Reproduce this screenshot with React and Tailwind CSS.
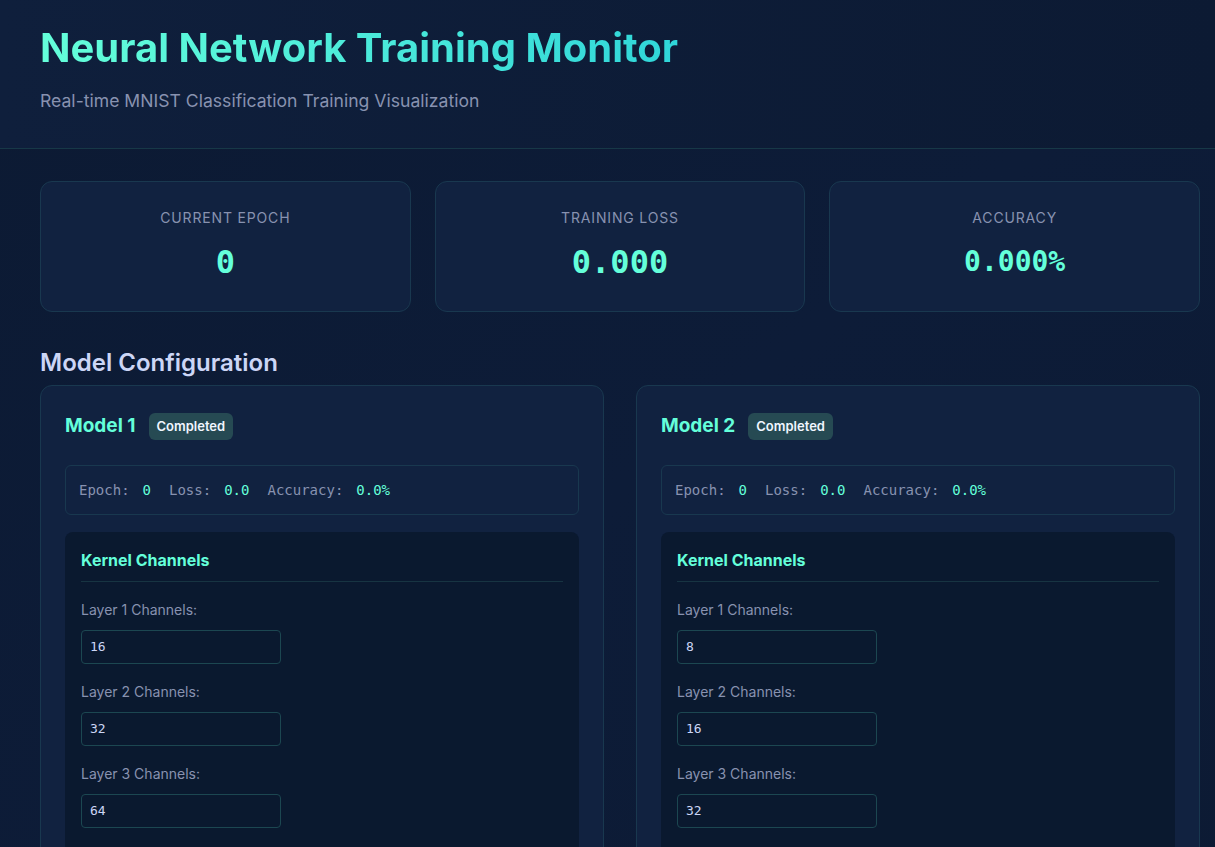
import React from "react";

const mono = { fontFamily: '"DejaVu Sans Mono", "Liberation Mono", monospace' };

function StatCard({ label, value, small }) {
  return (
    <div className="rounded-xl border border-[#19384f] bg-[#112240] pt-[26px] pb-[29px] text-center">
      <div className="text-[14px] leading-5 uppercase tracking-[0.06em] text-[#8892b0]">{label}</div>
      <div
        className={`mt-[14px] leading-[40px] font-bold text-[#64ffda] ${small ? "text-[28px]" : "text-[32px]"}`}
        style={mono}
      >
        {value}
      </div>
    </div>
  );
}

function Input({ value }) {
  return (
    <div
      className="mt-[10px] h-[34px] w-[200px] rounded border border-[#1c4751] bg-[#0a192f] px-2 flex items-center text-[13px] text-[#ccd6f6]"
      style={mono}
    >
      {value}
    </div>
  );
}

function Field({ label, value, first }) {
  return (
    <div className="mt-[18px]">
      <div className="text-[14px] leading-5 text-[#8892b0]">{label}</div>
      <Input value={value} />
    </div>
  );
}

function ModelCard({ name, channels }) {
  return (
    <div className="rounded-xl border border-[#19384f] bg-[#112240] px-6 pt-[27px]">
      <div className="flex items-center h-[27px]">
        <div className="text-[19px] font-bold text-[#64ffda]">{name}</div>
        <div className="ml-[13px] h-[27px] px-2 flex items-center rounded-md bg-[#264a53] text-[13px] font-semibold text-[#f0f6ff]">
          Completed
        </div>
      </div>
      <div
        className="mt-[25px] h-[50px] rounded-md border border-[#19384f] bg-[#112240] px-[13px] flex items-center text-[14px] text-[#8892b0]"
        style={mono}
      >
        <span className="mr-[18px]">
          Epoch:<span className="ml-[13px] text-[#64ffda]">0</span>
        </span>
        <span className="mr-[18px]">
          Loss:<span className="ml-[13px] text-[#64ffda]">0.0</span>
        </span>
        <span>
          Accuracy:<span className="ml-[13px] text-[#64ffda]">0.0%</span>
        </span>
      </div>
      <div className="mt-[17px] rounded-lg bg-[#0a192f] px-4 pt-4 pb-6">
        <div className="pb-[9px] border-b border-[#173442] text-[16px] leading-6 font-bold text-[#64ffda]">
          Kernel Channels
        </div>
        <Field label="Layer 1 Channels:" value={channels[0]} />
        <Field label="Layer 2 Channels:" value={channels[1]} />
        <Field label="Layer 3 Channels:" value={channels[2]} />
        <Field label="Fully Connected Units:" value="128" />
      </div>
      <div className="h-6" />
    </div>
  );
}

export default function App() {
  return (
    <div
      className="min-h-screen bg-gradient-to-br from-[#0c1a33] via-[#0d1c38] to-[#0c1a33]"
      style={{ fontFamily: 'Inter, "Noto Sans", sans-serif' }}
    >
      <header className="px-10 pt-6 pb-[35px] border-b border-[#173847] bg-gradient-to-r from-[#0f1f3c] to-[#0c1a33]">
        <h1 className="text-[40px] leading-[48px] font-bold bg-gradient-to-r from-[#64ffda] to-[#2fd6d9] bg-clip-text text-transparent w-fit">
          Neural Network Training Monitor
        </h1>
        <p className="mt-[17px] text-[17.6px] leading-6 text-[#8892b0]">
          Real-time MNIST Classification Training Visualization
        </p>
      </header>
      <main className="pl-10 pt-8 pb-10">
        <div className="w-[1160px]">
          <div className="grid grid-cols-3 gap-6">
            <StatCard label="Current Epoch" value="0" />
            <StatCard label="Training Loss" value="0.000" />
            <StatCard label="Accuracy" value="0.000%" small />
          </div>
          <h2 className="mt-[35px] mb-[6px] text-[24px] leading-8 font-semibold text-[#ccd6f6]">
            Model Configuration
          </h2>
          <div className="grid grid-cols-2 gap-8">
            <ModelCard name="Model 1" channels={["16", "32", "64"]} />
            <ModelCard name="Model 2" channels={["8", "16", "32"]} />
          </div>
        </div>
      </main>
    </div>
  );
}
